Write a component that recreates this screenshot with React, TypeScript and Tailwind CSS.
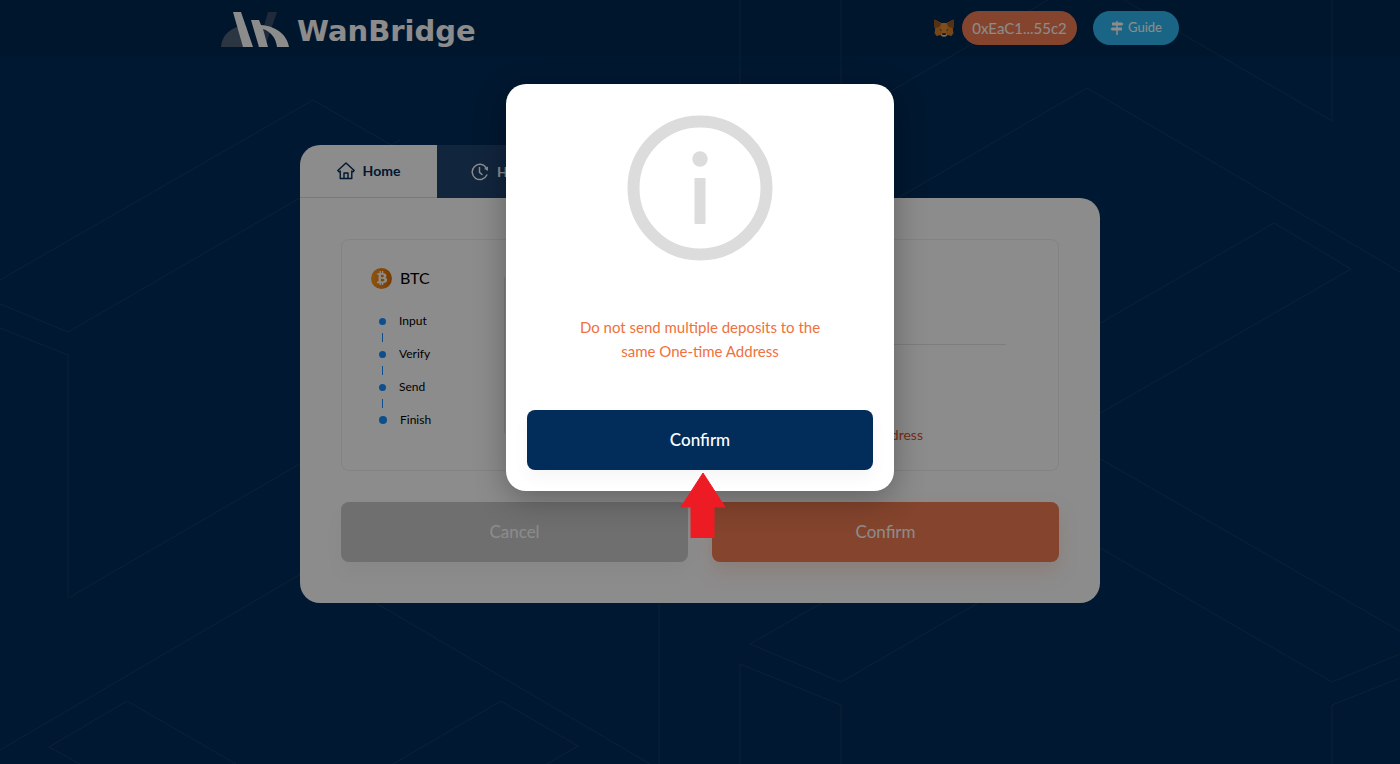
import { useState } from 'react'
import { FaBtc } from 'react-icons/fa'

const steps = ['Input', 'Verify', 'Send', 'Finish']

function Backdrop() {
  return (
    <svg
      aria-hidden="true"
      viewBox="0 0 1400 764"
      preserveAspectRatio="xMidYMin slice"
      className="absolute inset-0 h-full w-full"
      fill="none"
      stroke="#1b3d62"
    >
      <path d="M0 280 313 100 400 150" />
      <path d="M0 304 68 332 400 140" />
      <path d="M0 328 68 355V598L400 406" />
      <path d="M0 750 400 516" />
      <path d="M80 764 49 747 127 701 236 764" />
      <path d="M340 582 650 764M659 560V764" />
      <path d="M393 764 501 701 578 746 547 764" />
      <path d="M860 581 750 644 841 682 1016 581" />
      <path d="M740 764V664L841 705V764" />
      <path d="M740 0V200M841 0V120L1048 0" />
      <path d="M1124 0 1332 121V0" />
      <path d="M860 220 1087 88 1400 272" />
      <path d="M1050 352 1274 223 1351 269 1050 442" />
      <path d="M1050 430 1400 631" />
      <path d="M1050 519 1332 682 1400 654" />
      <path d="M1400 678 1332 705V764" />
    </svg>
  )
}

function BridgeMark() {
  return (
    <svg aria-hidden="true" viewBox="0 0 68 36" className="h-9 w-[68px]">
      <path d="M0 35C1 23 10 14 25 14L30 35Z" fill="#50637a" />
      <path d="M47 0H56L44 35H37Z" fill="#3a4f6a" />
      <path d="M12 0H20L32 35H22Z" fill="#fff" />
      <path d="M30 8H38L40 13C54 14 66 22 68 35H56C55 27 51 20 42 17L47 35H38Z" fill="#fff" />
    </svg>
  )
}

function FoxIcon() {
  return (
    <svg aria-hidden="true" viewBox="0 0 20 18" className="h-[18px] w-5">
      <path d="M.5 .5 7.500 4H12.500L19.500 .5 20 7 18.800 10 19.500 14 17.500 17 13.500 16 11.500 17.500H8.500L6.500 16 2.500 17 .5 14 1.200 10 0 7Z" fill="#d9802a" />
      <path d="M.5 .5 7.500 4.500 5 8 1 9 0 7ZM19.500 .5 12.500 4.500 15 8 19 9 20 7Z" fill="#9a5a24" />
      <path d="M7.500 4H12.500L13.500 10 11.500 15H8.500L6.500 10Z" fill="#e88f33" />
      <path d="M5.500 10 8 11 7 12ZM14.500 10 12 11 13 12Z" fill="#4a3320" />
      <path d="M7.500 15H12.500L13 16.300 11.500 17.500H8.500L7 16.300Z" fill="#d8d0c8" />
      <path d="M8.500 14.300H11.500L12 16H8Z" fill="#2b2118" />
    </svg>
  )
}

function SignpostIcon() {
  return (
    <svg aria-hidden="true" viewBox="0 0 14 14" className="h-3.5 w-3.5" fill="currentColor">
      <path d="M6.250 0H7.750V14H6.250Z" />
      <path d="M2 1.500H12L13.500 3 12 4.500H2Z" />
      <path d="M2 6.500H12V9.500H2L.5 8Z" />
    </svg>
  )
}

function HomeIcon() {
  return (
    <svg aria-hidden="true" viewBox="0 0 18 18" className="h-[18px] w-[18px]" fill="none" stroke="currentColor" strokeWidth="1.4" strokeLinejoin="round">
      <path d="M9 1 .8 8.600 2 9.800 3.200 9V16.500H14.800V9L16 9.800 17.200 8.600Z" />
      <path d="M7 16.500V11H11V16.500" />
    </svg>
  )
}

function HistoryIcon() {
  return (
    <svg aria-hidden="true" viewBox="0 0 18 18" className="h-[18px] w-[18px]" fill="none" stroke="currentColor" strokeWidth="1.5" strokeLinecap="round">
      <path d="M15.800 12A7.600 7.600 0 1 1 15 4.500L16.200 7" />
      <path d="M8.500 4.500V9.300L11 11.500" />
      <path d="M13 6 16.800 7.200 17 3.500Z" fill="currentColor" stroke="none" />
    </svg>
  )
}

function InfoIcon() {
  return (
    <svg aria-hidden="true" viewBox="0 0 146 146" className="mx-auto h-[146px] w-[146px]" fill="#dcdcdc">
      <circle cx="73" cy="73" r="66.500" fill="none" stroke="#dcdcdc" strokeWidth="12" />
      <circle cx="73" cy="44" r="7.700" />
      <rect x="67.500" y="63" width="11" height="46" rx="1" />
    </svg>
  )
}

function Header() {
  return (
    <header className="relative bg-black/8">
      <div className="mx-auto flex h-14 max-w-[958px] items-center justify-between">
        <a href="#" className="flex items-center gap-2 pt-1 text-white">
          <BridgeMark />
          <span className="pt-0.5 font-['DejaVu_Sans',sans-serif] text-[29px] leading-9 font-bold">WanBridge</span>
        </a>
        <div className="flex items-center gap-2 text-white">
          <FoxIcon />
          <button type="button" className="h-[34px] w-[115px] rounded-full bg-[#f07d52] text-[15px]">
            0xEaC1...55c2
          </button>
          <a href="#" className="ml-2 flex h-[34px] w-[86px] items-center justify-center gap-1 rounded-full bg-[#31b9f3] text-[13px]">
            <SignpostIcon />
            Guide
          </a>
        </div>
      </div>
    </header>
  )
}

function Tabs() {
  return (
    <nav className="flex h-[53px] text-sm font-bold">
      <button type="button" className="flex w-[137px] items-center justify-center gap-2 rounded-tl-[20px] border-b border-[#dddddd] bg-white text-[#022c5a]">
        <HomeIcon />
        Home
      </button>
      <button type="button" className="flex w-[150px] items-center gap-2 bg-[#1f446f] pl-[34px] text-white">
        <HistoryIcon />
        History
      </button>
    </nav>
  )
}

function Progress() {
  return (
    <div className="w-[162px] pt-[26px] pl-[29px]">
      <div className="flex items-center gap-2 text-base leading-6">
        <span className="flex h-[21px] w-[21px] items-center justify-center rounded-full bg-linear-to-r from-[#ff9a1a] to-[#e06c00] text-sm text-white">
          <FaBtc />
        </span>
        BTC
      </div>
      <ol className="mt-[19px] pl-2 text-xs">
        {steps.map((step, i) => (
          <li key={step}>
            {i > 0 && <div className="mx-[3px] h-[9px] w-px bg-[#1890ff]" />}
            <div className="flex h-6 items-center gap-[13px]">
              <span className={i === steps.length - 1 ? 'h-2 w-2 rounded-full bg-[#1890ff]' : 'h-[7px] w-[7px] rounded-full bg-[#1890ff]'} />
              {step}
            </div>
          </li>
        ))}
      </ol>
    </div>
  )
}

type ConfirmDialogProps = {
  onConfirm: () => void
}

function ConfirmDialog({ onConfirm }: Readonly<ConfirmDialogProps>) {
  return (
    <div className="absolute inset-0 flex items-start justify-center bg-black/45 pt-[84px]">
      <div role="dialog" aria-modal="true" className="relative w-[388px] rounded-[20px] bg-white px-[21px] pt-[31px] pb-[21px] shadow-[0_8px_32px_rgba(0,0,0,0.3)]">
        <InfoIcon />
        <p className="mx-auto mt-[54px] max-w-[250px] text-center text-[15px] leading-6 text-[#f07040]">
          Do not send multiple deposits to the same One-time Address
        </p>
        <button
          type="button"
          onClick={onConfirm}
          className="mt-[47px] h-[60px] w-full rounded-lg bg-[#022c5a] text-[17px] font-medium text-white shadow-[0_8px_16px_rgba(0,0,0,0.04)]"
        >
          Confirm
        </button>
        <svg aria-hidden="true" viewBox="0 0 46 66" className="absolute top-[388px] left-[174px] h-[66px] w-[46px]" fill="#ed1c24">
          <path d="M23 1 45 35H34V66H11V35H1Z" stroke="#ed1c24" strokeLinejoin="round" />
        </svg>
      </div>
    </div>
  )
}

export default function App() {
  const [dialogOpen, setDialogOpen] = useState(true)

  return (
    <div className="relative min-h-screen bg-[#002c5a] font-['Lato',sans-serif] text-black">
      <Backdrop />
      <Header />
      <main className="relative mx-auto max-w-[800px] pt-[89px] pb-20">
        <Tabs />
        <section className="rounded-[20px] rounded-tl-none bg-white p-[41px]">
          <div className="flex h-[232px] rounded-lg border border-[#efefef]">
            <Progress />
            <div className="my-[37px] flex-1 border-l border-[#e4e4e4] pr-[52px]">
              <div className="ml-12 h-[68px] border-b border-[#e4e4e4]" />
              <p className="pt-20 pr-[83px] text-right text-sm leading-5 text-[#e0512a]">One-time Address</p>
            </div>
          </div>
          <div className="mt-[31px] grid grid-cols-2 gap-6 text-[17px] text-white">
            <button type="button" className="h-[60px] rounded-lg bg-[#cacaca] shadow-[0_10px_20px_rgba(0,0,0,0.04)]">
              Cancel
            </button>
            <button type="button" onClick={() => setDialogOpen(true)} className="h-[60px] rounded-lg bg-[#f07d52] shadow-[0_10px_20px_rgba(240,125,82,0.2)]">
              Confirm
            </button>
          </div>
        </section>
      </main>
      {dialogOpen && <ConfirmDialog onConfirm={() => setDialogOpen(false)} />}
    </div>
  )
}
